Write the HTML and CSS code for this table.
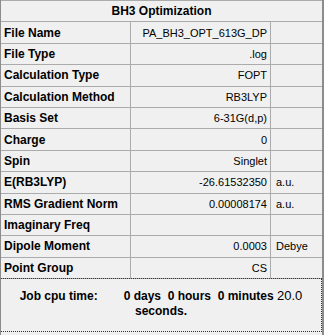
FILE: index.html
```html
<!DOCTYPE html>
<html lang="en">
<head>
    <meta charset="UTF-8">
    <title>BH3 Optimization</title>
    <link rel="stylesheet" href="styles.css">
</head>
<body>
    <div class="panel">
        <div class="summary">
            <div class="title">BH3 Optimization</div>

            <div class="label">File Name</div>
            <div class="value">PA_BH3_OPT_613G_DP</div>
            <div class="unit"></div>

            <div class="label">File Type</div>
            <div class="value">.log</div>
            <div class="unit"></div>

            <div class="label">Calculation Type</div>
            <div class="value">FOPT</div>
            <div class="unit"></div>

            <div class="label">Calculation Method</div>
            <div class="value">RB3LYP</div>
            <div class="unit"></div>

            <div class="label">Basis Set</div>
            <div class="value">6-31G(d,p)</div>
            <div class="unit"></div>

            <div class="label">Charge</div>
            <div class="value">0</div>
            <div class="unit"></div>

            <div class="label">Spin</div>
            <div class="value">Singlet</div>
            <div class="unit"></div>

            <div class="label">E(RB3LYP)</div>
            <div class="value">-26.61532350</div>
            <div class="unit">a.u.</div>

            <div class="label">RMS Gradient Norm</div>
            <div class="value">0.00008174</div>
            <div class="unit">a.u.</div>

            <div class="label">Imaginary Freq</div>
            <div class="value"></div>
            <div class="unit"></div>

            <div class="label">Dipole Moment</div>
            <div class="value">0.0003</div>
            <div class="unit">Debye</div>

            <div class="label">Point Group</div>
            <div class="value">CS</div>
            <div class="unit"></div>
        </div>

        <div class="job">
            <p><b>Job cpu time:</b><span class="gap"></span><b>0 days&nbsp; 0 hours&nbsp; 0 minutes</b> <span class="secs">20.0</span><br><b>seconds.</b></p>
        </div>
    </div>
</body>
</html>
```

FILE: styles.css
```css
* {
    margin: 0;
    padding: 0;
    box-sizing: border-box;
}

body {
    background: #ffffff;
    font-family: 'Liberation Sans', Arial, sans-serif;
    font-size: 12px;
    color: #000;
}

.panel {
    width: 324px;
    height: 335px;
    background: #f0f0f0;
    border-left: 1px solid #8c8c8c;
    border-right: 2px solid #8c8c8c;
}

/* property grid: the 1px gaps show through as the cell borders */
.summary {
    display: grid;
    grid-template-columns: 129px 139px 51px;
    grid-auto-rows: 20.4px;
    gap: 1px;
    background: #ababab;
    border-top: 1px solid #ababab;
    border-bottom: 1px solid #ababab;
    padding-right: 1px;
}

.summary > div {
    background: #f0f0f0;
    display: flex;
    align-items: center;
    white-space: nowrap;
    overflow: hidden;
}

.title {
    grid-column: 1 / -1;
    justify-content: center;
    font-weight: bold;
}

.label {
    font-weight: bold;
    padding-left: 3px;
}

.value {
    justify-content: flex-end;
    padding-right: 3px;
    font-size: 11px;
}

.unit {
    padding-left: 5px;
    font-size: 11px;
}

.job {
    height: 54px;
    border-bottom: 1px dotted #333;
    border-right: 1px dotted #333;
    border-top: 1px dotted #333;
    margin-top: -1px;
    padding-top: 9px;
    text-align: center;
    line-height: 15px;
}

.job .gap {
    display: inline-block;
    width: 26px;
}

.secs {
    font-size: 13px;
}
```
